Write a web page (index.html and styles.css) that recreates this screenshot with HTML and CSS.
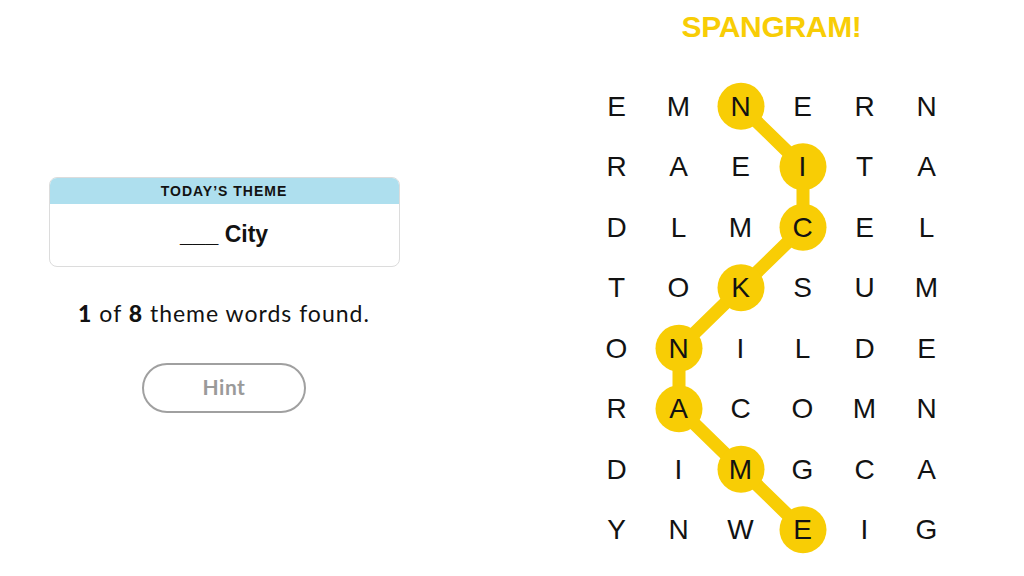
FILE: index.html
```html
<!DOCTYPE html>
<html>
<head>
<meta charset="utf-8">
<link rel="stylesheet" href="styles.css">
</head>
<body>
<div class="page">
  <section class="left">
    <div class="theme-card">
      <div class="theme-head">TODAY’S THEME</div>
      <div class="theme-body">___ City</div>
    </div>
    <p class="found"><b>1</b> of <b>8</b> theme words found.</p>
    <button class="hint">Hint</button>
  </section>
  <section class="right">
    <h1 class="spangram">SPANGRAM!</h1>
    <div class="board">
      <svg class="path" viewBox="0 0 372 484" width="372" height="484">
        <polyline points="155,30.25 217,90.75 217,151.25 155,211.75 93,272.25 93,332.75 155,393.25 217,453.75" fill="none" stroke="#f8cd05" stroke-width="13" stroke-linejoin="round" stroke-linecap="round"/>
        <g fill="#f8cd05">
          <circle cx="155" cy="30.25" r="23.5"/>
          <circle cx="217" cy="90.75" r="23.5"/>
          <circle cx="217" cy="151.25" r="23.5"/>
          <circle cx="155" cy="211.75" r="23.5"/>
          <circle cx="93" cy="272.25" r="23.5"/>
          <circle cx="93" cy="332.75" r="23.5"/>
          <circle cx="155" cy="393.25" r="23.5"/>
          <circle cx="217" cy="453.75" r="23.5"/>
        </g>
      </svg>
      <div class="grid">
        <span>E</span><span>M</span><span>N</span><span>E</span><span>R</span><span>N</span>
        <span>R</span><span>A</span><span>E</span><span>I</span><span>T</span><span>A</span>
        <span>D</span><span>L</span><span>M</span><span>C</span><span>E</span><span>L</span>
        <span>T</span><span>O</span><span>K</span><span>S</span><span>U</span><span>M</span>
        <span>O</span><span>N</span><span>I</span><span>L</span><span>D</span><span>E</span>
        <span>R</span><span>A</span><span>C</span><span>O</span><span>M</span><span>N</span>
        <span>D</span><span>I</span><span>M</span><span>G</span><span>C</span><span>A</span>
        <span>Y</span><span>N</span><span>W</span><span>E</span><span>I</span><span>G</span>
      </div>
    </div>
  </section>
</div>
</body>
</html>
```

FILE: styles.css
```css
html, body {
  margin: 0;
  padding: 0;
  background: #ffffff;
}
body {
  width: 1024px;
  height: 576px;
  overflow: hidden;
  font-family: "Liberation Sans", Arial, sans-serif;
  color: #121212;
}
.page {
  display: flex;
  width: 1024px;
  height: 576px;
}
.left {
  width: 448px;
  display: flex;
  flex-direction: column;
  align-items: center;
  padding-top: 177px;
  box-sizing: border-box;
}
.theme-card {
  width: 351px;
  box-sizing: border-box;
  border: 1px solid #dcdcdc;
  border-radius: 8px;
  overflow: hidden;
}
.theme-head {
  background: #aedfee;
  height: 26px;
  line-height: 27px;
  text-align: center;
  font-weight: bold;
  font-size: 14px;
  letter-spacing: 1px;
  color: #121212;
}
.theme-body {
  height: 62px;
  line-height: 60px;
  text-align: center;
  font-weight: bold;
  font-size: 23px;
  color: #121212;
}
.found {
  margin: 32px 0 0;
  font-family: Lato, "Liberation Sans", sans-serif;
  font-size: 23px;
  line-height: 28px;
  letter-spacing: 1px;
  color: #121212;
}
.found b {
  font-weight: 900;
}
.hint {
  margin-top: 36px;
  width: 164px;
  height: 50px;
  box-sizing: border-box;
  border: 2px solid #a0a0a0;
  border-radius: 25px;
  background: #ffffff;
  font-family: Lato, "Liberation Sans", sans-serif;
  font-weight: bold;
  font-size: 21px;
  letter-spacing: 0.5px;
  color: #9a9a9a;
  padding: 0 0 3px;
}
.right {
  width: 505px;
  margin-left: auto;
  display: flex;
  flex-direction: column;
  align-items: center;
}
.spangram {
  margin: 9px 0 0;
  height: 36px;
  line-height: 36px;
  font-size: 30px;
  font-weight: bold;
  color: #f8cd05;
  letter-spacing: -0.3px;
}
.board {
  position: relative;
  margin-top: 30.75px;
  width: 372px;
  height: 484px;
}
.path {
  position: absolute;
  left: 0;
  top: 0;
}
.grid {
  position: relative;
  display: grid;
  grid-template-columns: repeat(6, 62px);
  grid-template-rows: repeat(8, 60.5px);
}
.grid span {
  display: flex;
  align-items: center;
  justify-content: center;
  font-size: 28px;
  color: #121212;
  padding-top: 1px;
}
```
